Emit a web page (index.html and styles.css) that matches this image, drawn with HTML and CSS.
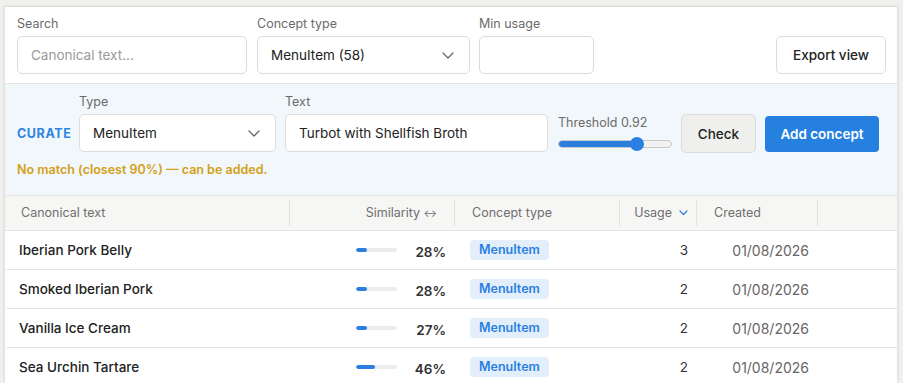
FILE: index.html
```html
<!DOCTYPE html>
<html lang="en">
<head>
<meta charset="utf-8">
<title>Concepts</title>
<link rel="stylesheet" href="styles.css">
</head>
<body>
<div class="panel">
  <div class="filters">
    <div class="field">
      <label class="lbl">Search</label>
      <div class="input search"><span class="ph">Canonical text...</span></div>
    </div>
    <div class="field">
      <label class="lbl">Concept type</label>
      <div class="input select concept">
        <span>MenuItem (58)</span>
        <svg class="chev" width="12" height="7" viewBox="0 0 12 7"><path d="M1 1l5 5 5-5" fill="none" stroke="#666" stroke-width="1.3" stroke-linecap="round" stroke-linejoin="round"/></svg>
      </div>
    </div>
    <div class="field">
      <label class="lbl">Min usage</label>
      <div class="input minuse"></div>
    </div>
    <button class="btn export">Export view</button>
  </div>

  <div class="curate">
    <div class="curate-row">
      <div class="curate-tag">CURATE</div>
      <div class="field">
        <label class="lbl">Type</label>
        <div class="input select ctype">
          <span>MenuItem</span>
          <svg class="chev" width="12" height="7" viewBox="0 0 12 7"><path d="M1 1l5 5 5-5" fill="none" stroke="#666" stroke-width="1.3" stroke-linecap="round" stroke-linejoin="round"/></svg>
        </div>
      </div>
      <div class="field">
        <label class="lbl">Text</label>
        <div class="input ctext"><span>Turbot with Shellfish Broth</span></div>
      </div>
      <div class="threshold">
        <div class="lbl">Threshold 0.92</div>
        <div class="slider">
          <div class="track"><div class="fill"></div></div>
          <div class="thumb"></div>
        </div>
      </div>
      <button class="btn check">Check</button>
      <button class="btn add">Add concept</button>
    </div>
    <div class="msg">No match (closest 90%) — can be added.</div>
  </div>

  <div class="table">
    <div class="thead">
      <div class="th c1">Canonical text</div>
      <div class="th c2">Similarity <span class="arr">↔</span></div>
      <div class="th c3">Concept type</div>
      <div class="th c4">Usage <svg class="sort" width="9" height="6" viewBox="0 0 9 6"><path d="M1 1l3.5 3.5L8 1" fill="none" stroke="#2a80e0" stroke-width="1.2" stroke-linecap="round" stroke-linejoin="round"/></svg></div>
      <div class="th c5">Created</div>
      <div class="th c6 last"></div>
    </div>

    <div class="tr">
      <div class="td name">Iberian Pork Belly</div>
      <div class="td sim"><div class="bar"><div class="barfill" style="width:28%"></div></div><span class="pct">28%</span></div>
      <div class="td type"><span class="badge">MenuItem</span></div>
      <div class="td usage">3</div>
      <div class="td date">01/08/2026</div>
      <div class="td"></div>
    </div>
    <div class="tr">
      <div class="td name">Smoked Iberian Pork</div>
      <div class="td sim"><div class="bar"><div class="barfill" style="width:28%"></div></div><span class="pct">28%</span></div>
      <div class="td type"><span class="badge">MenuItem</span></div>
      <div class="td usage">2</div>
      <div class="td date">01/08/2026</div>
      <div class="td"></div>
    </div>
    <div class="tr">
      <div class="td name">Vanilla Ice Cream</div>
      <div class="td sim"><div class="bar"><div class="barfill" style="width:27%"></div></div><span class="pct">27%</span></div>
      <div class="td type"><span class="badge">MenuItem</span></div>
      <div class="td usage">2</div>
      <div class="td date">01/08/2026</div>
      <div class="td"></div>
    </div>
    <div class="tr">
      <div class="td name">Sea Urchin Tartare</div>
      <div class="td sim"><div class="bar"><div class="barfill" style="width:46%"></div></div><span class="pct">46%</span></div>
      <div class="td type"><span class="badge">MenuItem</span></div>
      <div class="td usage">2</div>
      <div class="td date">01/08/2026</div>
      <div class="td"></div>
    </div>
  </div>
</div>
</body>
</html>
```

FILE: styles.css
```css
* { box-sizing: border-box; }
html, body { margin: 0; padding: 0; }
body {
  background: #f0f0ef;
  font-family: "Inter", "Liberation Sans", sans-serif;
  color: #222;
  height: 383px;
  overflow: hidden;
}
.panel {
  margin: 7px 5px 0 4px;
  background: #fff;
  border-left: 1px solid #e3e3e3;
  border-right: 1px solid #e3e3e3;
  box-shadow: 0 -1px 2px rgba(0,0,0,0.12);
  height: 376px;
  overflow: hidden;
}
.filters {
  display: flex;
  align-items: flex-end;
  padding: 9px 11px 9px 12px;
  border-bottom: 1px solid #e4e4e4;
}
.field { display: flex; flex-direction: column; }
.lbl {
  font-size: 12.5px;
  line-height: 16px;
  color: #6b6b6b;
  margin-bottom: 4px;
}
.input {
  height: 38px;
  border: 1px solid #dcdcdc;
  border-radius: 5px;
  background: #fff;
  display: flex;
  align-items: center;
  padding: 0 13px;
  font-size: 13.5px;
  color: #222;
}
.ph { color: #9a9a9a; }
.search { width: 230px; }
.concept { width: 213px; }
.filters .field + .field { margin-left: 10px; }
.filters .field:nth-child(3) { margin-left: 9px; }
.minuse { width: 115px; }
.select { justify-content: space-between; padding-right: 15px; }
.chev { display: block; }
.btn {
  font-family: inherit;
  font-size: 13.5px;
  font-weight: 500;
  border-radius: 5px;
  cursor: pointer;
}
.export {
  margin-left: auto;
  width: 110px;
  height: 38px;
  border: 1px solid #dcdcdc;
  background: #fff;
  color: #222;
}
.curate {
  background: #f2f7fc;
  padding: 10px 12px 17px 12px;
  border-bottom: 1px solid #e4e4e4;
}
.curate-row {
  display: flex;
  align-items: flex-end;
}
.curate-tag {
  font-size: 12.5px;
  font-weight: 700;
  letter-spacing: 0.6px;
  color: #2b85e2;
  height: 38px;
  line-height: 40px;
  width: 53px;
  margin-right: 9px;
}
.ctype { width: 197px; }
.curate-row .field + .field { margin-left: 9px; }
.ctext { width: 263px; }
.threshold { width: 114px; margin-left: 10px; padding-bottom: 1px; }
.threshold .lbl { margin-bottom: 6px; }
.slider { position: relative; height: 14px; }
.track {
  position: absolute;
  left: 0; right: 0; top: 3px;
  height: 8px;
  border: 1px solid #c9c9c9;
  border-radius: 4px;
  background: #f2f2f2;
  overflow: hidden;
}
.fill { width: 72%; height: 100%; background: #2a7fe0; }
.thumb {
  position: absolute;
  left: 72px; top: 0;
  width: 14px; height: 14px;
  border-radius: 50%;
  background: #2a7fe0;
}
.check {
  width: 75px;
  height: 39px;
  border: 1px solid #dcdcdc;
  background: #efefed;
  color: #222;
  margin-left: 9px;
  margin-bottom: -1px;
}
.add {
  width: 114px;
  height: 36px;
  border: none;
  background: #2680e0;
  color: #fff;
  font-weight: 600;
  border-radius: 4px;
  margin-left: 9px;
  margin-bottom: 0;
}
.msg {
  margin-top: 10px;
  font-size: 12.5px;
  font-weight: 600;
  color: #d3a016;
  line-height: 16px;
}
.thead, .tr {
  display: grid;
  grid-template-columns: 285px 165px 165px 77px 121px 1fr;
}
.thead {
  background: #f6f6f5;
  height: 35px;
  border-bottom: 1px solid #e4e4e4;
  align-items: center;
}
.th {
  font-size: 12.5px;
  color: #6f6f6f;
  height: 26px;
  line-height: 26px;
  border-right: 1px solid #e1e1e1;
  white-space: nowrap;
}
.th.last { border-right: none; }
.th.c1 { padding-left: 16px; }
.th.c2 { text-align: right; padding-right: 17px; }
.arr { font-size: 10px; }
.th.c3 { padding-left: 17px; }
.th.c4 { padding-right: 8px; display: flex; justify-content: flex-end; align-items: center; gap: 7px; }
.th.c5 { padding-left: 17px; }
.tr {
  height: 39px;
  border-bottom: 1px solid #e4e4e4;
  align-items: center;
  margin-left: 1px;
}
.td { font-size: 13.5px; white-space: nowrap; }
.name { padding-left: 13px; font-weight: 500; color: #222; }
.sim {
  display: flex;
  align-items: center;
  justify-content: flex-end;
  padding-right: 10px;
  gap: 9px;
}
.bar {
  width: 41px;
  height: 4px;
  border-radius: 2px;
  background: #ececec;
  overflow: hidden;
}
.barfill { height: 100%; background: #2a7fe0; border-radius: 2px; }
.pct { width: 40px; text-align: right; font-weight: 600; color: #333; padding-top: 3px; }
.type { padding-left: 14px; }
.badge {
  display: inline-block;
  background: #e3eefb;
  color: #2a80e0;
  font-weight: 600;
  font-size: 12.5px;
  height: 20px;
  line-height: 20px;
  padding: 0 9px;
  border-radius: 4px;
}
.usage { text-align: right; padding-right: 10px; color: #333; }
.date { text-align: right; padding-right: 10px; color: #666; font-size: 14px; }
```
